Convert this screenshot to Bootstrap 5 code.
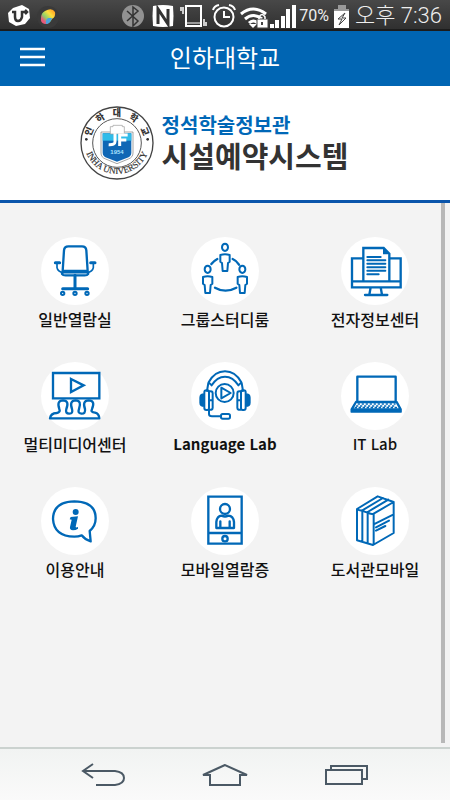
<!DOCTYPE html>
<html lang="ko">
<head>
<meta charset="utf-8">
<meta name="viewport" content="width=device-width, initial-scale=1">
<title>인하대학교 시설예약시스템</title>
<link href="https://cdn.jsdelivr.net/npm/bootstrap@5.3.0/dist/css/bootstrap.min.css" rel="stylesheet">
<style>
  body { font-family: "Noto Sans CJK KR", sans-serif; background: #f3f3f3; color: #111; }
  svg { display: block; flex: none; }
  .status-bar { height: 31px; background: linear-gradient(#484848, #303030); border-bottom: 2px solid #1c1c1c; color: #eee; font-family: Roboto, "Noto Sans CJK KR", sans-serif; padding: 2px 8px 0; }
  .battery-text { font-size: 16px; font-weight: 400; }
  .clock-text { font-size: 22px; line-height: 28px; font-weight: 300; }
  .app-bar { height: 55px; background: #0065b3; padding: 0 20px 4px; }
  .app-bar h1 { font-size: 24px; line-height: 36px; font-weight: 400; }
  .side-slot { width: 26px; }
  .brand-band { background: #fff; border-bottom: 3px solid #0a55ab; height: 117px; padding-right: 22px; gap: 8px; }
  .brand-words { padding-bottom: 5px; }
  .brand-top { font-size: 20px; line-height: 29px; color: #0068b7; font-weight: 700; }
  .brand-main { font-size: 29px; line-height: 32px; color: #333; font-weight: 700; }
  .scroll-area { border-right: 4px solid #b8b8b8; margin: 0 5px 4px 0; padding-top: 34px; }
  .tile-grid { margin-right: -9px; row-gap: 31px; }
  .tile { font-size: 16px; line-height: 24px; font-weight: 500; color: #111; gap: 2px; }
  .tile:hover { color: #0068b7; }
  .tile-latin { font-size: 15px; }
  .disc { width: 68px; height: 68px; background: #fff; border-radius: 50%; }
  .disc svg { width: 68px; height: 68px; fill: none; stroke: #0068b7; stroke-width: 7; stroke-linejoin: round; stroke-linecap: round; }
  .disc .solid { fill: #0068b7; stroke: none; }
  .disc .thin { stroke-width: 5; }
  .disc .medium { stroke-width: 6; }
  .disc .bold { stroke-width: 9; }
  .system-bar { height: 53px; background: linear-gradient(#f1f3f2, #fafafa); border-top: 2px solid #cbd2cf; gap: 74px; }
  .system-bar svg { fill: none; stroke: #4b5965; stroke-width: 2; }
</style>
<script src="https://cdn.jsdelivr.net/npm/bootstrap@5.3.0/dist/js/bootstrap.bundle.min.js"></script>
</head>
<body class="d-flex flex-column min-vh-100">

<div class="status-bar d-flex align-items-center">
  <svg width="54" height="28" viewBox="0 0 54 28">
    <path d="M5 6l9-3 7 4 1 9-5 6-9 2-7-4-1-9z" fill="#fff"/>
    <path d="M4 10h3v5q0 4 3 4t4-4v-5h5m-2-2l2 2-2 2" fill="none" stroke="#333" stroke-width="2.5"/>
    <circle cx="40" cy="15" r="11" fill="#3a3a3a"/>
    <defs><linearGradient id="bean" x1="1" y1="0" x2="0" y2="1"><stop offset="0" stop-color="#ff8a1c"/><stop offset=".35" stop-color="#ffdf3c"/><stop offset=".6" stop-color="#8fd36a"/><stop offset=".8" stop-color="#e8587c"/></linearGradient></defs>
    <path d="M37 9q7-4 10 1 1 5-3 7-2 5-7 5-5-1-4-6 0-5 4-7z" fill="url(#bean)"/>
    <path d="M38 22q-1-4 2-6h4q-2 6-6 6z" fill="#4aa3df"/>
  </svg>
  <div class="d-flex align-items-center ms-auto">
    <svg width="179" height="28" viewBox="120 1 179 28" fill="none" stroke="#fff" stroke-width="2">
      <circle cx="133" cy="15" r="11" fill="#929292" stroke="none"/>
      <path d="M127 10l11 10-5 5V6l5 4-11 10" stroke="#333" stroke-width="1.5"/>
      <path d="M153 5q10-2 20 0 1 10 0 20-10 2-20 0-1-10 0-20z" fill="#fff" stroke="none"/>
      <path d="M158 23V8l10 15V8" stroke="#333" stroke-width="3"/>
      <rect x="186" y="5" width="15" height="20"/><path d="M187 22h13" stroke-width="1"/>
      <path d="M183 6v7M181 6v4M204 18v7M206 21v4" stroke-width="1.5"/>
      <circle cx="224" cy="16" r="9.5"/><path d="M224 10v6h6M213 9q1-4 6-5M229 4q5 1 6 5"/>
      <g stroke-width="3"><path d="M241 13q12-10 25 0M245 18q8-7 17 0M249 22q4-4 9 0"/></g><path d="M249 23h8l-4 4z" fill="#fff" stroke="none"/>
      <rect x="257" y="18" width="11" height="9" fill="#fff" stroke="#444" stroke-width="1"/><path d="M259 18v-2q3-5 6 0v2" stroke-width="1.5"/><path d="M262 21v3" stroke="#444"/>
      <path d="M270 27v-4h4v4zM275 27v-8h4v8zM281 27v-12h4v12zM286 27V8h4v19zM292 27V4h4v23z" fill="#fff" stroke="none"/>
    </svg>
    <span class="battery-text">70%</span>
    <svg class="ms-1" width="18" height="26" viewBox="0 0 18 26"><path d="M5 2h8v4h3v5H1V6h4z" fill="#999"/><path d="M1 8h15v17H1z" fill="#fff"/><path d="M12 10l-7 6 4 0-3 6 7-7-4 0z" fill="none" stroke="#444" stroke-width="1"/></svg>
    <span class="clock-text ms-1 text-nowrap">오후 7:36</span>
  </div>
</div>

<header class="app-bar d-flex align-items-center justify-content-between text-white">
  <button type="button" class="btn p-0 border-0 side-slot" aria-label="메뉴">
    <svg width="26" height="20" viewBox="0 0 26 20" stroke="#fff" stroke-width="2.5"><path d="M0 2h25M0 10h25M0 18h25"/></svg>
  </button>
  <h1 class="m-0">인하대학교</h1>
  <span class="side-slot"></span>
</header>

<div class="brand-band d-flex align-items-center justify-content-center">
  <svg width="74" height="74" viewBox="0 0 222 222">
    <defs>
      <path id="arcTop" d="M30 111a81 81 0 0 1 162 0"/>
      <path id="arcBottom" d="M12 105a99 99 0 0 0 198 0"/>
    </defs>
    <circle cx="111" cy="111" r="108" fill="#fff" stroke="#444" stroke-width="4"/>
    <circle cx="111" cy="111" r="73" fill="#fff" stroke="#555" stroke-width="3"/>
    <text font-size="27" font-weight="900" fill="#333" text-anchor="middle"><textPath href="#arcTop" startOffset="50%">인&#160;&#160;&#160;하&#160;&#160;&#160;대&#160;&#160;&#160;학&#160;&#160;&#160;교</textPath></text>
    <text font-size="27" font-family="Liberation Serif, serif" fill="#333" stroke="#333" stroke-width=".5" text-anchor="middle"><textPath href="#arcBottom" startOffset="50%">INHA UNIVERSITY</textPath></text>
    <circle cx="19" cy="100" r="4" fill="#333"/><circle cx="203" cy="100" r="4" fill="#333"/>
    <path d="M63 78h96v63q0 13-14 18l-34 14-34-14q-14-5-14-18z" fill="#fff" stroke="#777" stroke-width="2"/>
    <path d="M68 82h86v58q0 11-12 15l-31 12-31-12q-12-4-12-15z" fill="#1067b5"/>
    <path d="M68 82h86v22H68z" fill="#30bce9"/>
    <path d="M91 62h8v-4h28v4h6v22H91z" fill="#fff" stroke="#999" stroke-width="2"/>
    <path d="M105 82v25q0 10-19 9M119 120V87h24M119 102h20" fill="none" stroke="#fff" stroke-width="9"/>
    <text x="111" y="144" font-size="18" font-family="Liberation Sans, sans-serif" font-weight="700" fill="#a8e2ff" text-anchor="middle">1954</text>
  </svg>
  <div class="brand-words">
    <div class="brand-top">정석학술정보관</div>
    <div class="brand-main">시설예약시스템</div>
  </div>
</div>

<main class="scroll-area flex-grow-1">
  <nav class="tile-grid row gx-0" aria-label="시설">
    <div class="col-4"><a href="#" class="tile d-flex flex-column align-items-center text-decoration-none text-nowrap">
      <span class="disc"><svg viewBox="0 0 204 204"><path d="M65 102l4-62q1-12 13-12h41q12 0 13 12l4 62zM66 102q-9 13 8 13h57q16 0 8-13"/><path class="thin" d="M66 107h73"/><path class="bold" d="M43 77h13M149 77h13"/><path class="thin" d="M48 79v13q2 12 19 15M157 79v13q-2 12-19 15"/><path class="bold" d="M102 115v38M65 155h75"/><g class="medium"><circle cx="65" cy="169" r="5"/><circle cx="102" cy="169" r="5"/><circle cx="138" cy="169" r="5"/></g></svg></span>
      일반열람실</a></div>
    <div class="col-4"><a href="#" class="tile d-flex flex-column align-items-center text-decoration-none text-nowrap">
      <span class="disc"><svg viewBox="0 0 204 204"><defs><g id="person"><ellipse cx="102" cy="31" rx="9" ry="11"/><path d="M88 54q14-4 28 0v20l-5 4-2 24H95l-2-24-5-4z"/></g></defs><g class="medium"><use href="#person"/><use href="#person" x="-52" y="66"/><use href="#person" x="52" y="66"/></g><path d="M61 81q7-9 18-15M125 66q12 5 19 17M72 152q31 18 64 0"/></svg></span>
      그룹스터디룸</a></div>
    <div class="col-4"><a href="#" class="tile d-flex flex-column align-items-center text-decoration-none text-nowrap">
      <span class="disc"><svg viewBox="0 0 204 204"><g stroke-linejoin="miter"><path d="M67 64H33v87h146V64h-34M33 133h146M67 133V33h61l17 17v83M89 151l-4 22M119 151l4 22M72 174h67"/></g><path class="solid" d="M126 33l19 19h-19z"/><path class="medium" d="M79 60h40M79 70h54M79 80h54M79 91h54M79 101h54M79 112h34"/></svg></span>
      전자정보센터</a></div>
    <div class="col-4"><a href="#" class="tile d-flex flex-column align-items-center text-decoration-none text-nowrap">
      <span class="disc"><svg viewBox="0 0 204 204"><g stroke-linejoin="miter"><path d="M36 33h139v76H36z"/><path d="M90 51l38 19-38 20z"/></g><path d="M37 169h138q-1-14-13-17-14-2-9-11 11-25-10-26-20 1-11 26 2 15-11 14-12-1-7-14 9-25-10-26-20 1-11 26 4 14-8 14-13 0-9-14 10-25-10-26-20 1-11 26 4 10-8 12-18 1-20 16z"/></svg></span>
      멀티미디어센터</a></div>
    <div class="col-4"><a href="#" class="tile tile-latin fw-bold d-flex flex-column align-items-center text-decoration-none text-nowrap">
      <span class="disc"><svg viewBox="0 0 204 204"><g class="medium"><circle cx="101" cy="93" r="27"/><path d="M91 77l28 16-28 16z"/><path d="M53 61q18-33 49-33t49 33l-9 9q-16-26-40-26T62 70zM52 63l-4 24M152 63l4 24"/><path d="M40 91q0-6 6-6h3q5 0 5 6v47q0 6-5 6h-3q-6 0-6-6zM54 88q11-2 11 6v43q0 8-11 6M40 97q-12 0-12 10v15q0 10 12 10M34 98v33M54 115h11"/><path d="M164 91q0-6-6-6h-3q-5 0-5 6v47q0 6 5 6h3q6 0 6-6zM150 88q-11-2-11 6v43q0 8 11 6M164 97q12 0 12 10v15q0 10-12 10M170 98v33M150 115h-11"/><path d="M54 145v11q0 7 9 7h26"/><rect x="90" y="156" width="27" height="14" rx="5"/></g></svg></span>
      Language Lab</a></div>
    <div class="col-4"><a href="#" class="tile tile-latin d-flex flex-column align-items-center text-decoration-none text-nowrap">
      <span class="disc"><svg viewBox="0 0 204 204"><path d="M49 120V44h115v76zM45 120l-13 22v7h147v-7l-12-22M33 142h146"/><path class="thin" d="M52 126h110M47 132h119M43 137h126" stroke-dasharray="3 9"/></svg></span>
      IT Lab</a></div>
    <div class="col-4"><a href="#" class="tile d-flex flex-column align-items-center text-decoration-none text-nowrap">
      <span class="disc"><svg viewBox="0 0 204 204"><path d="M149 163l-3-31q18-15 18-38 0-50-64-51-63 1-64 53 3 52 64 53 12 0 22-4 10 13 27 18z"/><path class="solid" d="M89 90l22-2-7 31q0 4 7 1v5q-7 5-15 5-11-1-9-10l5-22-6-1z"/><circle class="solid" cx="104" cy="75" r="9"/></svg></span>
      이용안내</a></div>
    <div class="col-4"><a href="#" class="tile d-flex flex-column align-items-center text-decoration-none text-nowrap">
      <span class="disc"><svg viewBox="0 0 204 204"><g stroke-linejoin="miter"><path d="M52 29h100v141H52zM52 138h100"/></g><circle cx="102" cy="155" r="8"/><circle cx="102" cy="66" r="15"/><path d="M76 123v-18q2-18 16-19 10 5 20 0 15 1 17 19v18zM88 103v19M116 103v19"/></svg></span>
      모바일열람증</a></div>
    <div class="col-4"><a href="#" class="tile d-flex flex-column align-items-center text-decoration-none text-nowrap">
      <span class="disc"><svg viewBox="0 0 204 204"><g class="medium"><path d="M48 66l62-38 48 17v93l-62 36-48-14zM48 66q8 6 16 4v94M64 70l62-37M64 70q8 7 16 5v94M80 75l62-37M80 75q8 8 18 5v93M98 80l60-35M98 112l60-30M105 121l39-20M105 131l28-14"/></g></svg></span>
      도서관모바일</a></div>
  </nav>
</main>

<footer class="system-bar d-flex align-items-center justify-content-center">
  <button type="button" class="btn p-0 border-0" aria-label="뒤로"><svg width="48" height="26" viewBox="0 0 48 26"><path d="M14 2L4 9l10 7M4 9h32q9 1 9 7t-9 7H17"/></svg></button>
  <button type="button" class="btn p-0 border-0" aria-label="홈"><svg width="48" height="26" viewBox="0 0 48 26"><path d="M24 3L2 13h7v10h30V13h7z"/></svg></button>
  <button type="button" class="btn p-0 border-0" aria-label="최근 앱"><svg width="48" height="26" viewBox="0 0 48 26"><path d="M3 8h36v14H3zM8 8V4h36v13h-5"/></svg></button>
</footer>
</body>
</html>
